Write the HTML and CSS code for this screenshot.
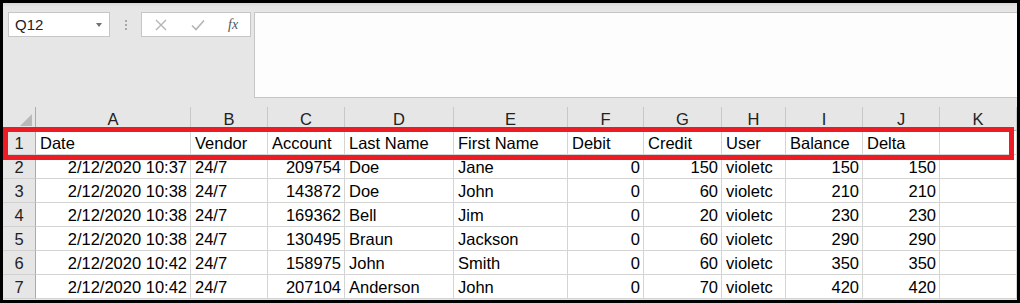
FILE: index.html
```html
<!DOCTYPE html>
<html>
<head>
<meta charset="utf-8">
<link rel="stylesheet" href="styles.css">
</head>
<body>
<div class="frame">
  <div class="app">
    <div class="fbar">
      <div class="namebox">
        <span class="ref">Q12</span>
        <span class="caret"></span>
      </div>
      <div class="grip"><i></i><i></i><i></i></div>
      <div class="fbtns">
        <svg class="ico" width="12" height="12" viewBox="0 0 12 12"><path d="M1 1 L11 11 M11 1 L1 11" stroke="#b4b4b4" stroke-width="1.4" fill="none"/></svg>
        <svg class="ico" width="14" height="12" viewBox="0 0 14 12"><path d="M1 6.5 L5 10.5 L13 1.5" stroke="#b4b4b4" stroke-width="1.6" fill="none"/></svg>
        <span class="fx">fx</span>
      </div>
      <div class="finput"></div>
    </div>
    <div class="sheet">
      <div class="corner"><span class="tri"></span></div>
      <div class="ch">A</div><div class="ch">B</div><div class="ch">C</div><div class="ch">D</div><div class="ch">E</div><div class="ch">F</div><div class="ch">G</div><div class="ch">H</div><div class="ch">I</div><div class="ch">J</div><div class="ch">K</div>

      <div class="rh">1</div>
      <div class="c">Date</div><div class="c">Vendor</div><div class="c">Account</div><div class="c">Last Name</div><div class="c">First Name</div><div class="c">Debit</div><div class="c">Credit</div><div class="c">User</div><div class="c">Balance</div><div class="c">Delta</div><div class="c"></div>

      <div class="rh">2</div>
      <div class="c n">2/12/2020 10:37</div><div class="c">24/7</div><div class="c n">209754</div><div class="c">Doe</div><div class="c">Jane</div><div class="c n">0</div><div class="c n">150</div><div class="c">violetc</div><div class="c n">150</div><div class="c n">150</div><div class="c"></div>

      <div class="rh">3</div>
      <div class="c n">2/12/2020 10:38</div><div class="c">24/7</div><div class="c n">143872</div><div class="c">Doe</div><div class="c">John</div><div class="c n">0</div><div class="c n">60</div><div class="c">violetc</div><div class="c n">210</div><div class="c n">210</div><div class="c"></div>

      <div class="rh">4</div>
      <div class="c n">2/12/2020 10:38</div><div class="c">24/7</div><div class="c n">169362</div><div class="c">Bell</div><div class="c">Jim</div><div class="c n">0</div><div class="c n">20</div><div class="c">violetc</div><div class="c n">230</div><div class="c n">230</div><div class="c"></div>

      <div class="rh">5</div>
      <div class="c n">2/12/2020 10:38</div><div class="c">24/7</div><div class="c n">130495</div><div class="c">Braun</div><div class="c">Jackson</div><div class="c n">0</div><div class="c n">60</div><div class="c">violetc</div><div class="c n">290</div><div class="c n">290</div><div class="c"></div>

      <div class="rh">6</div>
      <div class="c n">2/12/2020 10:42</div><div class="c">24/7</div><div class="c n">158975</div><div class="c">John</div><div class="c">Smith</div><div class="c n">0</div><div class="c n">60</div><div class="c">violetc</div><div class="c n">350</div><div class="c n">350</div><div class="c"></div>

      <div class="rh">7</div>
      <div class="c n">2/12/2020 10:42</div><div class="c">24/7</div><div class="c n">207104</div><div class="c">Anderson</div><div class="c">John</div><div class="c n">0</div><div class="c n">70</div><div class="c">violetc</div><div class="c n">420</div><div class="c n">420</div><div class="c"></div>
    </div>
    <div class="highlight"></div>
  </div>
</div>
</body>
</html>
```

FILE: styles.css
```css
* { box-sizing: border-box; }
html, body { margin: 0; padding: 0; background: #000; }
body { font-family: "Liberation Sans", Arial, sans-serif; }

.frame {
  width: 1020px;
  height: 303px;
  border: 3px solid #000;
  background: #000;
}

.app {
  position: relative;
  width: 1014px;
  height: 297px;
  background: #e6e6e6;
  background-image: linear-gradient(#d9d9d9, #e6e6e6 4px);
  overflow: hidden;
}

.fbar {
  display: flex;
  align-items: flex-start;
  padding: 9px 0 0 5px;
  height: 104px;
}

.namebox {
  width: 102px;
  height: 25px;
  background: #fff;
  border: 1px solid #c6c6c6;
  display: flex;
  align-items: center;
  justify-content: space-between;
  padding: 0 7px 0 6px;
}
.ref { font-size: 15px; color: #222; }
.caret {
  width: 0; height: 0;
  border-left: 3.5px solid transparent;
  border-right: 3.5px solid transparent;
  border-top: 4px solid #707070;
}

.grip {
  width: 31px;
  height: 25px;
  display: flex;
  flex-direction: column;
  align-items: center;
  justify-content: center;
  gap: 2px;
}
.grip i {
  display: block;
  width: 2px;
  height: 2px;
  background: #a8a8a8;
}

.fbtns {
  width: 110px;
  height: 25px;
  background: #fff;
  border: 1px solid #c6c6c6;
  display: flex;
  align-items: center;
  padding-left: 13px;
  gap: 24px;
}
.ico { display: block; }
.fx {
  font-family: "Liberation Serif", "Times New Roman", serif;
  font-style: italic;
  font-size: 14px;
  color: #555;
  margin-left: -1px;
}

.finput {
  flex: 1;
  margin-left: 3px;
  height: 86px;
  background: #fdfdfd;
  border: 1px solid #c6c6c6;
  border-right: none;
}

.sheet {
  display: grid;
  grid-template-columns: 33px 155px 77px 77px 109px 114px 76px 78px 64px 77px 77px 77px;
  grid-auto-rows: 24px;
  font-size: 16.5px;
  color: #000;
}

.corner {
  position: relative;
  background: #e6e6e6;
  border-right: 1px solid #ababab;
  border-bottom: 1px solid #ababab;
}
.tri {
  position: absolute;
  right: 3px;
  bottom: 4px;
  width: 0; height: 0;
  border-left: 12px solid transparent;
  border-bottom: 12px solid #b9b9b9;
}

.ch {
  background: #e6e6e6;
  border-right: 1px solid #c8c8c8;
  border-bottom: 1px solid #ababab;
  text-align: center;
  line-height: 25px;
  overflow: hidden;
  color: #222;
}

.rh {
  background: #e6e6e6;
  border-right: 1px solid #ababab;
  border-bottom: 1px solid #d0d0d0;
  text-align: center;
  line-height: 25px;
  overflow: hidden;
  color: #222;
}

.c {
  background: #fff;
  border-right: 1px solid #d4d4d4;
  border-bottom: 1px solid #d4d4d4;
  line-height: 25px;
  padding: 0 3px 0 4px;
  white-space: nowrap;
  overflow: hidden;
}
.c.n { text-align: right; }

.highlight {
  position: absolute;
  left: 0;
  top: 124px;
  width: 1011px;
  height: 33px;
  border: 5px solid #ed1c24;
}
```
